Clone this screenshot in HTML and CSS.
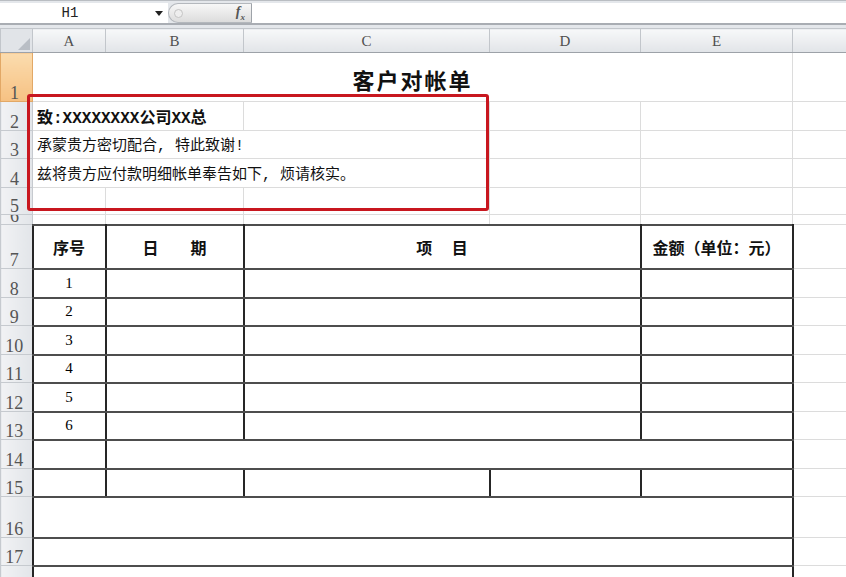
FILE: index.html
```html
<!DOCTYPE html>
<html lang="zh-CN">
<head>
    <meta charset="UTF-8">
    <meta name="viewport" content="width=device-width, initial-scale=1.0">
    <title>客户对帐单</title>
    <link rel="stylesheet" href="styles.css">
</head>
<body>
    <div class="formula-bar">
        <div class="fb-row">
            <div class="name-box">H1</div>
            <div class="name-arrow">
                <svg width="8" height="5" viewBox="0 0 8 5"><path d="M0 0h8L4 5z" fill="#222"/></svg>
            </div>
            <div class="fx-pill">
                <span class="fx-knob"></span>
                <span class="fx">f<sub>x</sub></span>
            </div>
            <div class="formula-input"></div>
        </div>
    </div>

    <div class="sheet-wrap">
        <table class="sheet">
            <colgroup>
                <col class="c-head">
                <col class="c-a">
                <col class="c-b">
                <col class="c-c">
                <col class="c-d">
                <col class="c-e">
                <col class="c-f">
            </colgroup>
            <thead>
                <tr class="col-head">
                    <th class="corner">
                        <svg width="12" height="12" viewBox="0 0 12 12"><path d="M12 0v12H0z" fill="#b9bec5"/></svg>
                    </th>
                    <th>A</th>
                    <th>B</th>
                    <th>C</th>
                    <th>D</th>
                    <th>E</th>
                    <th></th>
                </tr>
            </thead>
            <tbody>
                <tr class="h49">
                    <th class="row-head selected">1</th>
                    <td colspan="5" class="title">客户对帐单</td>
                    <td></td>
                </tr>
                <tr class="h29">
                    <th class="row-head">2</th>
                    <td colspan="2" class="note bold">致:XXXXXXXX公司XX总</td>
                    <td></td>
                    <td></td>
                    <td></td>
                    <td></td>
                </tr>
                <tr class="h28">
                    <th class="row-head">3</th>
                    <td colspan="3" class="note">承蒙贵方密切配合, 特此致谢!</td>
                    <td></td>
                    <td></td>
                    <td></td>
                </tr>
                <tr class="h29">
                    <th class="row-head">4</th>
                    <td colspan="3" class="note">兹将贵方应付款明细帐单奉告如下, 烦请核实。</td>
                    <td></td>
                    <td></td>
                    <td></td>
                </tr>
                <tr class="h27">
                    <th class="row-head">5</th>
                    <td></td>
                    <td></td>
                    <td></td>
                    <td></td>
                    <td></td>
                    <td></td>
                </tr>
                <tr class="h10">
                    <th class="row-head"><div class="clip">6</div></th>
                    <td></td>
                    <td></td>
                    <td></td>
                    <td></td>
                    <td></td>
                    <td></td>
                </tr>
                <tr class="h44">
                    <th class="row-head">7</th>
                    <td class="box head">序号</td>
                    <td class="box head">日　　期</td>
                    <td colspan="2" class="box head">项　 目</td>
                    <td class="box head">金额（单位：元）</td>
                    <td></td>
                </tr>
                <tr class="h29">
                    <th class="row-head">8</th>
                    <td class="box num">1</td>
                    <td class="box"></td>
                    <td colspan="2" class="box"></td>
                    <td class="box"></td>
                    <td></td>
                </tr>
                <tr class="h28">
                    <th class="row-head">9</th>
                    <td class="box num">2</td>
                    <td class="box"></td>
                    <td colspan="2" class="box"></td>
                    <td class="box"></td>
                    <td></td>
                </tr>
                <tr class="h29">
                    <th class="row-head">10</th>
                    <td class="box num">3</td>
                    <td class="box"></td>
                    <td colspan="2" class="box"></td>
                    <td class="box"></td>
                    <td></td>
                </tr>
                <tr class="h28">
                    <th class="row-head">11</th>
                    <td class="box num">4</td>
                    <td class="box"></td>
                    <td colspan="2" class="box"></td>
                    <td class="box"></td>
                    <td></td>
                </tr>
                <tr class="h29">
                    <th class="row-head">12</th>
                    <td class="box num">5</td>
                    <td class="box"></td>
                    <td colspan="2" class="box"></td>
                    <td class="box"></td>
                    <td></td>
                </tr>
                <tr class="h28">
                    <th class="row-head">13</th>
                    <td class="box num">6</td>
                    <td class="box"></td>
                    <td colspan="2" class="box"></td>
                    <td class="box"></td>
                    <td></td>
                </tr>
                <tr class="h29">
                    <th class="row-head">14</th>
                    <td class="box"></td>
                    <td colspan="4" class="box"></td>
                    <td></td>
                </tr>
                <tr class="h28">
                    <th class="row-head">15</th>
                    <td class="box"></td>
                    <td class="box"></td>
                    <td class="box"></td>
                    <td class="box"></td>
                    <td class="box"></td>
                    <td></td>
                </tr>
                <tr class="h41">
                    <th class="row-head">16</th>
                    <td colspan="5" class="box"></td>
                    <td></td>
                </tr>
                <tr class="h28">
                    <th class="row-head">17</th>
                    <td colspan="5" class="box"></td>
                    <td></td>
                </tr>
                <tr class="h28">
                    <th class="row-head">18</th>
                    <td colspan="5" class="box"></td>
                    <td></td>
                </tr>
            </tbody>
        </table>
        <div class="callout"></div>
    </div>
</body>
</html>
```

FILE: styles.css
```css
body {
    margin: 0;
    padding: 0;
    background-color: #fff;
    font-family: "Noto Sans CJK SC", sans-serif;
    overflow: hidden;
}

/* formula bar */
.formula-bar {
    height: 28px;
    box-sizing: border-box;
    border-top: 1px solid #b9bdc2;
    padding-top: 2px;
    background: #e4e7eb;
}

.fb-row {
    display: flex;
    height: 20px;
    border-bottom: 2px solid #a9adb3;
}

.name-box {
    width: 140px;
    padding-right: 10px;
    background: #fff;
    text-align: center;
    font: 14px/20px "Liberation Mono", monospace;
    color: #222;
}

.name-arrow {
    width: 18px;
    background: #fff;
    display: flex;
    align-items: center;
    justify-content: center;
}

.fx-pill {
    width: 84px;
    box-sizing: border-box;
    display: flex;
    align-items: center;
    justify-content: space-between;
    padding: 0 6px 0 5px;
    border: 1px solid #b4b8bd;
    border-right-color: #9ea3a9;
    border-radius: 10px 0 0 10px;
    background: linear-gradient(#f7f7f7, #dcdcdc);
}

.fx-knob {
    width: 7px;
    height: 7px;
    border: 1px solid #c4c4c4;
    border-radius: 50%;
    background: #eee;
}

.fx {
    font: italic bold 14px "Liberation Serif", serif;
    color: #555;
}

.fx sub {
    font-size: 9px;
}

.formula-input {
    flex: 1;
    background: #fff;
}

/* sheet */
.sheet-wrap {
    position: relative;
}

.sheet {
    width: 846px;
    border-collapse: collapse;
    table-layout: fixed;
}

.c-head { width: 32px; }
.c-a { width: 73px; }
.c-b { width: 138px; }
.c-c { width: 246px; }
.c-d { width: 151px; }
.c-e { width: 152px; }
.c-f { width: 54px; }

.h10 { height: 10px; }
.h27 { height: 27px; }
.h28 { height: 28px; }
.h29 { height: 29px; }
.h41 { height: 41px; }
.h44 { height: 44px; }
.h49 { height: 49px; }

.sheet td {
    border: 1px solid #dcdcdc;
    padding: 0 4px;
    overflow: hidden;
    white-space: nowrap;
    color: #111;
}

.col-head {
    height: 24px;
}

.col-head th {
    padding: 0;
    background: linear-gradient(#f7f8f9, #e1e4e8);
    border: 1px solid #c2c6cb;
    border-bottom-color: #9da2a8;
    font: normal 15px/18px "Liberation Serif", serif;
    color: #4f4f4f;
}

.col-head .corner {
    vertical-align: bottom;
    line-height: 0;
    background: #e1e4e8;
}

.corner svg {
    display: block;
    margin: 0 2px 2px auto;
}

.row-head {
    padding: 0 4px 0 0;
    background: linear-gradient(90deg, #f1f2f4, #e2e5e9);
    border: 1px solid #c6cacf;
    font: normal 18px/16px "Liberation Serif", serif;
    color: #555;
    text-align: center;
    vertical-align: bottom;
}

.row-head.selected {
    background: linear-gradient(#fbdcae, #f6c182);
    border-color: #e2a866;
}

.clip {
    height: 9px;
    overflow: hidden;
    display: flex;
    align-items: flex-end;
    justify-content: center;
}

.sheet .title {
    text-align: center;
    vertical-align: bottom;
    padding-bottom: 10px;
    font-size: 22px;
    line-height: 24px;
    letter-spacing: 2px;
    font-weight: bold;
}

.sheet .note {
    vertical-align: bottom;
    padding-bottom: 2px;
    font: 15px/18px "Liberation Mono", "Noto Sans CJK SC", monospace;
}

.sheet .note.bold {
    font-size: 16px;
    font-weight: bold;
}

.sheet td.box {
    border: 2px solid #4d4d4d;
    border-left-color: #262626;
    border-right-color: #262626;
}

.head {
    text-align: center;
    font-size: 16px;
    font-weight: bold;
}

.sheet .num {
    text-align: center;
    font: 15px "Liberation Serif", serif;
    color: #000;
}

/* red annotation frame */
.callout {
    position: absolute;
    left: 27px;
    top: 66px;
    width: 462px;
    height: 117px;
    box-sizing: border-box;
    border: 3px solid #c8171f;
    border-radius: 3px;
}
```
